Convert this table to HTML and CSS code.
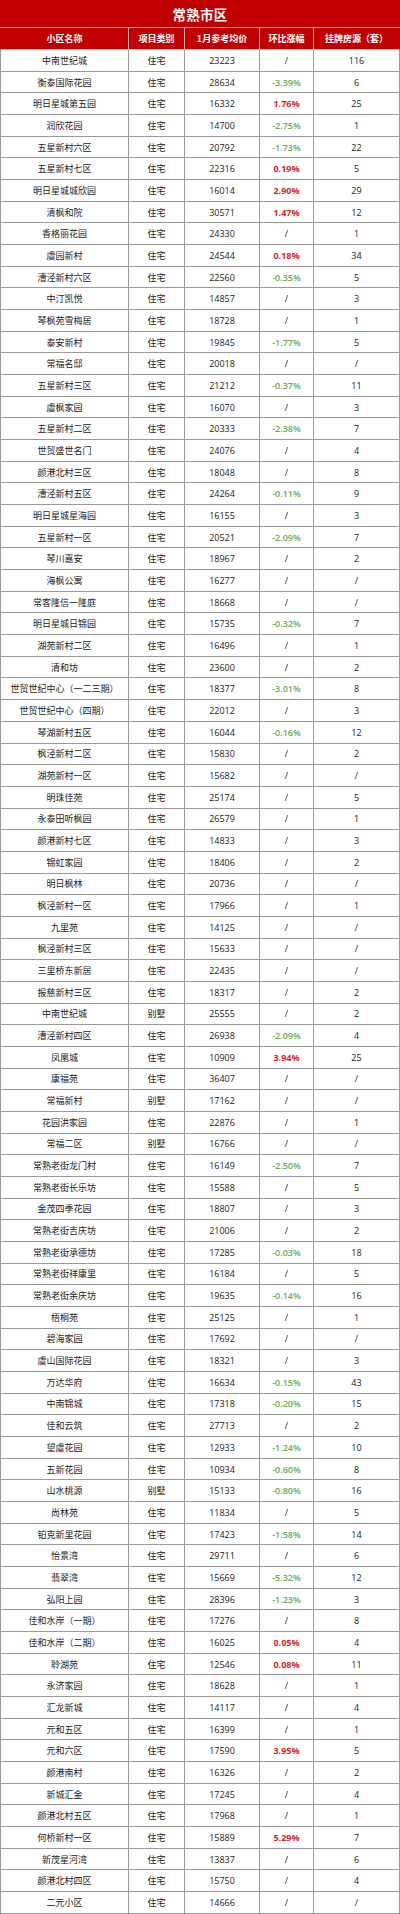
FILE: index.html
```html
<!DOCTYPE html>
<html lang="zh-CN">
<head>
<meta charset="utf-8">
<title>常熟市区</title>
<link rel="stylesheet" href="styles.css">
</head>
<body>
<div class="table">
  <div class="title">常熟市区</div>
  <div class="row head">
    <div class="c">小区名称</div><div class="c">项目类别</div><div class="c">1月参考均价</div><div class="c">环比涨幅</div><div class="c">挂牌房源（套）</div>
  </div>
  <div class="row"><div class="c">中南世纪城</div><div class="c">住宅</div><div class="c n">23223</div><div class="c n">/</div><div class="c n">116</div></div>
  <div class="row"><div class="c">衡泰国际花园</div><div class="c">住宅</div><div class="c n">28634</div><div class="c n dn">-3.39%</div><div class="c n">6</div></div>
  <div class="row"><div class="c">明日星城第五园</div><div class="c">住宅</div><div class="c n">16332</div><div class="c n up">1.76%</div><div class="c n">25</div></div>
  <div class="row"><div class="c">润欣花园</div><div class="c">住宅</div><div class="c n">14700</div><div class="c n dn">-2.75%</div><div class="c n">1</div></div>
  <div class="row"><div class="c">五星新村六区</div><div class="c">住宅</div><div class="c n">20792</div><div class="c n dn">-1.73%</div><div class="c n">22</div></div>
  <div class="row"><div class="c">五星新村七区</div><div class="c">住宅</div><div class="c n">22316</div><div class="c n up">0.19%</div><div class="c n">5</div></div>
  <div class="row"><div class="c">明日星城城欣园</div><div class="c">住宅</div><div class="c n">16014</div><div class="c n up">2.90%</div><div class="c n">29</div></div>
  <div class="row"><div class="c">清枫和院</div><div class="c">住宅</div><div class="c n">30571</div><div class="c n up">1.47%</div><div class="c n">12</div></div>
  <div class="row"><div class="c">香格丽花园</div><div class="c">住宅</div><div class="c n">24330</div><div class="c n">/</div><div class="c n">1</div></div>
  <div class="row"><div class="c">虞园新村</div><div class="c">住宅</div><div class="c n">24544</div><div class="c n up">0.18%</div><div class="c n">34</div></div>
  <div class="row"><div class="c">漕泾新村六区</div><div class="c">住宅</div><div class="c n">22560</div><div class="c n dn">-0.35%</div><div class="c n">5</div></div>
  <div class="row"><div class="c">中汀凯悦</div><div class="c">住宅</div><div class="c n">14857</div><div class="c n">/</div><div class="c n">3</div></div>
  <div class="row"><div class="c">琴枫苑雪梅居</div><div class="c">住宅</div><div class="c n">18728</div><div class="c n">/</div><div class="c n">1</div></div>
  <div class="row"><div class="c">泰安新村</div><div class="c">住宅</div><div class="c n">19845</div><div class="c n dn">-1.77%</div><div class="c n">5</div></div>
  <div class="row"><div class="c">常福名邸</div><div class="c">住宅</div><div class="c n">20018</div><div class="c n">/</div><div class="c n">/</div></div>
  <div class="row"><div class="c">五星新村三区</div><div class="c">住宅</div><div class="c n">21212</div><div class="c n dn">-0.37%</div><div class="c n">11</div></div>
  <div class="row"><div class="c">虞枫家园</div><div class="c">住宅</div><div class="c n">16070</div><div class="c n">/</div><div class="c n">3</div></div>
  <div class="row"><div class="c">五星新村二区</div><div class="c">住宅</div><div class="c n">20333</div><div class="c n dn">-2.38%</div><div class="c n">7</div></div>
  <div class="row"><div class="c">世贸盛世名门</div><div class="c">住宅</div><div class="c n">24076</div><div class="c n">/</div><div class="c n">4</div></div>
  <div class="row"><div class="c">颜港北村三区</div><div class="c">住宅</div><div class="c n">18048</div><div class="c n">/</div><div class="c n">8</div></div>
  <div class="row"><div class="c">漕泾新村五区</div><div class="c">住宅</div><div class="c n">24264</div><div class="c n dn">-0.11%</div><div class="c n">9</div></div>
  <div class="row"><div class="c">明日星城星海园</div><div class="c">住宅</div><div class="c n">16155</div><div class="c n">/</div><div class="c n">3</div></div>
  <div class="row"><div class="c">五星新村一区</div><div class="c">住宅</div><div class="c n">20521</div><div class="c n dn">-2.09%</div><div class="c n">7</div></div>
  <div class="row"><div class="c">琴川嘉安</div><div class="c">住宅</div><div class="c n">18967</div><div class="c n">/</div><div class="c n">2</div></div>
  <div class="row"><div class="c">海枫公寓</div><div class="c">住宅</div><div class="c n">16277</div><div class="c n">/</div><div class="c n">/</div></div>
  <div class="row"><div class="c">常客隆信一隆庭</div><div class="c">住宅</div><div class="c n">18668</div><div class="c n">/</div><div class="c n">/</div></div>
  <div class="row"><div class="c">明日星城日锦园</div><div class="c">住宅</div><div class="c n">15735</div><div class="c n dn">-0.32%</div><div class="c n">7</div></div>
  <div class="row"><div class="c">湖苑新村二区</div><div class="c">住宅</div><div class="c n">16496</div><div class="c n">/</div><div class="c n">1</div></div>
  <div class="row"><div class="c">清和坊</div><div class="c">住宅</div><div class="c n">23600</div><div class="c n">/</div><div class="c n">2</div></div>
  <div class="row"><div class="c">世贸世纪中心（一二三期）</div><div class="c">住宅</div><div class="c n">18377</div><div class="c n dn">-3.01%</div><div class="c n">8</div></div>
  <div class="row"><div class="c">世贸世纪中心（四期）</div><div class="c">住宅</div><div class="c n">22012</div><div class="c n">/</div><div class="c n">3</div></div>
  <div class="row"><div class="c">琴湖新村五区</div><div class="c">住宅</div><div class="c n">16044</div><div class="c n dn">-0.16%</div><div class="c n">12</div></div>
  <div class="row"><div class="c">枫泾新村二区</div><div class="c">住宅</div><div class="c n">15830</div><div class="c n">/</div><div class="c n">2</div></div>
  <div class="row"><div class="c">湖苑新村一区</div><div class="c">住宅</div><div class="c n">15682</div><div class="c n">/</div><div class="c n">/</div></div>
  <div class="row"><div class="c">明珠佳苑</div><div class="c">住宅</div><div class="c n">25174</div><div class="c n">/</div><div class="c n">5</div></div>
  <div class="row"><div class="c">永泰田听枫园</div><div class="c">住宅</div><div class="c n">26579</div><div class="c n">/</div><div class="c n">1</div></div>
  <div class="row"><div class="c">颜港新村七区</div><div class="c">住宅</div><div class="c n">14833</div><div class="c n">/</div><div class="c n">3</div></div>
  <div class="row"><div class="c">锦虹家园</div><div class="c">住宅</div><div class="c n">18406</div><div class="c n">/</div><div class="c n">2</div></div>
  <div class="row"><div class="c">明日枫林</div><div class="c">住宅</div><div class="c n">20736</div><div class="c n">/</div><div class="c n">/</div></div>
  <div class="row"><div class="c">枫泾新村一区</div><div class="c">住宅</div><div class="c n">17966</div><div class="c n">/</div><div class="c n">1</div></div>
  <div class="row"><div class="c">九里苑</div><div class="c">住宅</div><div class="c n">14125</div><div class="c n">/</div><div class="c n">/</div></div>
  <div class="row"><div class="c">枫泾新村三区</div><div class="c">住宅</div><div class="c n">15633</div><div class="c n">/</div><div class="c n">/</div></div>
  <div class="row"><div class="c">三里桥东新居</div><div class="c">住宅</div><div class="c n">22435</div><div class="c n">/</div><div class="c n">/</div></div>
  <div class="row"><div class="c">报慈新村三区</div><div class="c">住宅</div><div class="c n">18317</div><div class="c n">/</div><div class="c n">2</div></div>
  <div class="row"><div class="c">中南世纪城</div><div class="c">别墅</div><div class="c n">25555</div><div class="c n">/</div><div class="c n">2</div></div>
  <div class="row"><div class="c">漕泾新村四区</div><div class="c">住宅</div><div class="c n">26938</div><div class="c n dn">-2.09%</div><div class="c n">4</div></div>
  <div class="row"><div class="c">凤凰城</div><div class="c">住宅</div><div class="c n">10909</div><div class="c n up">3.94%</div><div class="c n">25</div></div>
  <div class="row"><div class="c">康福苑</div><div class="c">住宅</div><div class="c n">36407</div><div class="c n">/</div><div class="c n">/</div></div>
  <div class="row"><div class="c">常福新村</div><div class="c">别墅</div><div class="c n">17162</div><div class="c n">/</div><div class="c n">/</div></div>
  <div class="row"><div class="c">花园洪家园</div><div class="c">住宅</div><div class="c n">22876</div><div class="c n">/</div><div class="c n">1</div></div>
  <div class="row"><div class="c">常福二区</div><div class="c">别墅</div><div class="c n">16766</div><div class="c n">/</div><div class="c n">/</div></div>
  <div class="row"><div class="c">常熟老街龙门村</div><div class="c">住宅</div><div class="c n">16149</div><div class="c n dn">-2.50%</div><div class="c n">7</div></div>
  <div class="row"><div class="c">常熟老街长乐坊</div><div class="c">住宅</div><div class="c n">15588</div><div class="c n">/</div><div class="c n">5</div></div>
  <div class="row"><div class="c">金茂四季花园</div><div class="c">住宅</div><div class="c n">18807</div><div class="c n">/</div><div class="c n">3</div></div>
  <div class="row"><div class="c">常熟老街吉庆坊</div><div class="c">住宅</div><div class="c n">21006</div><div class="c n">/</div><div class="c n">2</div></div>
  <div class="row"><div class="c">常熟老街承德坊</div><div class="c">住宅</div><div class="c n">17285</div><div class="c n dn">-0.03%</div><div class="c n">18</div></div>
  <div class="row"><div class="c">常熟老街祥康里</div><div class="c">住宅</div><div class="c n">16184</div><div class="c n">/</div><div class="c n">5</div></div>
  <div class="row"><div class="c">常熟老街余庆坊</div><div class="c">住宅</div><div class="c n">19635</div><div class="c n dn">-0.14%</div><div class="c n">16</div></div>
  <div class="row"><div class="c">梧桐苑</div><div class="c">住宅</div><div class="c n">25125</div><div class="c n">/</div><div class="c n">1</div></div>
  <div class="row"><div class="c">碧海家园</div><div class="c">住宅</div><div class="c n">17692</div><div class="c n">/</div><div class="c n">/</div></div>
  <div class="row"><div class="c">虞山国际花园</div><div class="c">住宅</div><div class="c n">18321</div><div class="c n">/</div><div class="c n">3</div></div>
  <div class="row"><div class="c">万达华府</div><div class="c">住宅</div><div class="c n">16634</div><div class="c n dn">-0.15%</div><div class="c n">43</div></div>
  <div class="row"><div class="c">中南锦城</div><div class="c">住宅</div><div class="c n">17318</div><div class="c n dn">-0.20%</div><div class="c n">15</div></div>
  <div class="row"><div class="c">佳和云筑</div><div class="c">住宅</div><div class="c n">27713</div><div class="c n">/</div><div class="c n">2</div></div>
  <div class="row"><div class="c">望虞花园</div><div class="c">住宅</div><div class="c n">12933</div><div class="c n dn">-1.24%</div><div class="c n">10</div></div>
  <div class="row"><div class="c">五新花园</div><div class="c">住宅</div><div class="c n">10934</div><div class="c n dn">-0.60%</div><div class="c n">8</div></div>
  <div class="row"><div class="c">山水桃源</div><div class="c">别墅</div><div class="c n">15133</div><div class="c n dn">-0.80%</div><div class="c n">16</div></div>
  <div class="row"><div class="c">尚林苑</div><div class="c">住宅</div><div class="c n">11834</div><div class="c n">/</div><div class="c n">5</div></div>
  <div class="row"><div class="c">铂克新里花园</div><div class="c">住宅</div><div class="c n">17423</div><div class="c n dn">-1.58%</div><div class="c n">14</div></div>
  <div class="row"><div class="c">怡景湾</div><div class="c">住宅</div><div class="c n">29711</div><div class="c n">/</div><div class="c n">6</div></div>
  <div class="row"><div class="c">翡翠湾</div><div class="c">住宅</div><div class="c n">15669</div><div class="c n dn">-5.32%</div><div class="c n">12</div></div>
  <div class="row"><div class="c">弘阳上园</div><div class="c">住宅</div><div class="c n">28396</div><div class="c n dn">-1.23%</div><div class="c n">3</div></div>
  <div class="row"><div class="c">佳和水岸（一期）</div><div class="c">住宅</div><div class="c n">17276</div><div class="c n">/</div><div class="c n">8</div></div>
  <div class="row"><div class="c">佳和水岸（二期）</div><div class="c">住宅</div><div class="c n">16025</div><div class="c n up">0.05%</div><div class="c n">4</div></div>
  <div class="row"><div class="c">聆湖苑</div><div class="c">住宅</div><div class="c n">12546</div><div class="c n up">0.08%</div><div class="c n">11</div></div>
  <div class="row"><div class="c">永济家园</div><div class="c">住宅</div><div class="c n">18628</div><div class="c n">/</div><div class="c n">1</div></div>
  <div class="row"><div class="c">汇龙新城</div><div class="c">住宅</div><div class="c n">14117</div><div class="c n">/</div><div class="c n">4</div></div>
  <div class="row"><div class="c">元和五区</div><div class="c">住宅</div><div class="c n">16399</div><div class="c n">/</div><div class="c n">1</div></div>
  <div class="row"><div class="c">元和六区</div><div class="c">住宅</div><div class="c n">17590</div><div class="c n up">3.95%</div><div class="c n">5</div></div>
  <div class="row"><div class="c">颜港南村</div><div class="c">住宅</div><div class="c n">16326</div><div class="c n">/</div><div class="c n">2</div></div>
  <div class="row"><div class="c">新城汇金</div><div class="c">住宅</div><div class="c n">17245</div><div class="c n">/</div><div class="c n">4</div></div>
  <div class="row"><div class="c">颜港北村五区</div><div class="c">住宅</div><div class="c n">17968</div><div class="c n">/</div><div class="c n">1</div></div>
  <div class="row"><div class="c">何桥新村一区</div><div class="c">住宅</div><div class="c n">15889</div><div class="c n up">5.29%</div><div class="c n">7</div></div>
  <div class="row"><div class="c">新茂星河湾</div><div class="c">住宅</div><div class="c n">13837</div><div class="c n">/</div><div class="c n">6</div></div>
  <div class="row"><div class="c">颜港北村四区</div><div class="c">住宅</div><div class="c n">15750</div><div class="c n">/</div><div class="c n">4</div></div>
  <div class="row"><div class="c">二元小区</div><div class="c">住宅</div><div class="c n">14666</div><div class="c n">/</div><div class="c n">/</div></div>
</div>
</body>
</html>
```

FILE: styles.css
```css
* { box-sizing: border-box; }
html, body { margin: 0; padding: 0; background: #fff; }
body {
  font-family: "Noto Sans CJK SC", "Noto Sans", sans-serif;
  color: #222;
}
.table {
  width: 400px;
  height: 1914px;
  display: flex;
  flex-direction: column;
}
.title {
  height: 28px;
  flex: none;
  background: #c00000;
  color: #fff;
  font-weight: 700;
  font-size: 13.5px;
  display: flex;
  align-items: center;
  justify-content: center;
  border-bottom: 1px solid #e7a0a0;
  letter-spacing: 0.3px;
}
.row {
  flex: 1 1 0;
  display: grid;
  grid-template-columns: 129px 56px 75px 54px 86px;
  min-height: 0;
}
.row.head {
  flex: none;
  height: 22px;
  background: #c00000;
  color: #fff;
  font-weight: 700;
}
.c {
  display: flex;
  align-items: center;
  justify-content: center;
  font-size: 9px;
  white-space: nowrap;
  border-right: 1px solid #9a9a9a;
  border-bottom: 1px solid #9a9a9a;
  overflow: hidden;
}
.c:first-child { border-left: 1px solid #9a9a9a; }
.head .c { border-color: #e2b0b0; font-size: 9px; }
.head .c:first-child { border-left-color: #c00000; }
.head .c:last-child { border-right-color: #c00000; }
.n { font-family: "Open Sans", "Noto Sans", sans-serif; font-size: 9px; }
.up { color: #d61f26; font-weight: 700; }
.dn { color: #6aab45; font-weight: 600; }
```
